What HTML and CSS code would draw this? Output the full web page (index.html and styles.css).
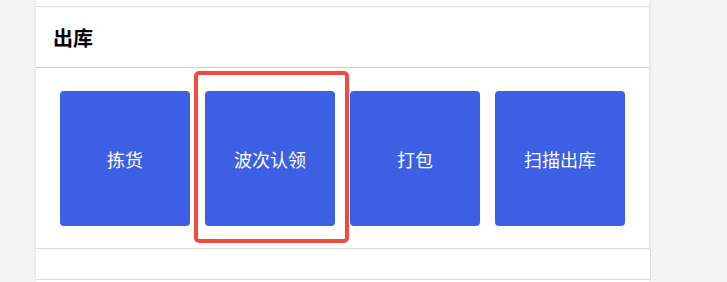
FILE: index.html
```html
<!DOCTYPE html>
<html lang="zh-CN">
<head>
<meta charset="utf-8">
<title>出库</title>
<link rel="stylesheet" href="styles.css">
</head>
<body>
<div class="page">
  <div class="prev-card"></div>
  <div class="card">
    <div class="card-header">出库</div>
    <div class="card-body">
      <div class="tile">拣货</div>
      <div class="tile tile-marked">波次认领<span class="mark"></span></div>
      <div class="tile">打包</div>
      <div class="tile">扫描出库</div>
    </div>
  </div>
  <div class="next-card"></div>
</div>
</body>
</html>
```
FILE: styles.css
```css
html, body {
  margin: 0;
  padding: 0;
  background: #f4f4f4;
  font-family: "Noto Sans CJK SC", "Noto Sans", sans-serif;
}
.page {
  margin-left: 36px;
  width: 613px;
  height: 282px;
  background: #fff;
  box-shadow: 0 0 4px rgba(0, 0, 0, 0.12);
}
.prev-card {
  height: 6px;
  border-bottom: 1px solid #dcdcdc;
}
.card-header {
  height: 60px;
  padding-left: 17px;
  display: flex;
  align-items: center;
  font-size: 20px;
  font-weight: 700;
  color: #000;
  border-bottom: 1px solid #cdcdcd;
}
.card-body {
  display: flex;
  gap: 15px;
  padding: 23px 24px 22px;
  border-bottom: 1px solid #dcdcdc;
}
.tile {
  position: relative;
  width: 130px;
  height: 135px;
  flex: none;
  background: #3c5fe4;
  border-radius: 4px;
  color: #fff;
  font-size: 18px;
  display: flex;
  align-items: center;
  justify-content: center;
}
.mark {
  position: absolute;
  left: -11px;
  top: -20px;
  width: 155px;
  height: 172px;
  box-sizing: border-box;
  border: 4px solid #f24b3f;
  border-radius: 5px;
}
.next-card {
  width: 614px;
  height: 30px;
  box-sizing: content-box;
  border-bottom: 1px solid #dcdcdc;
  border-right: 1px solid #dcdcdc;
  background: #fff;
}
```
